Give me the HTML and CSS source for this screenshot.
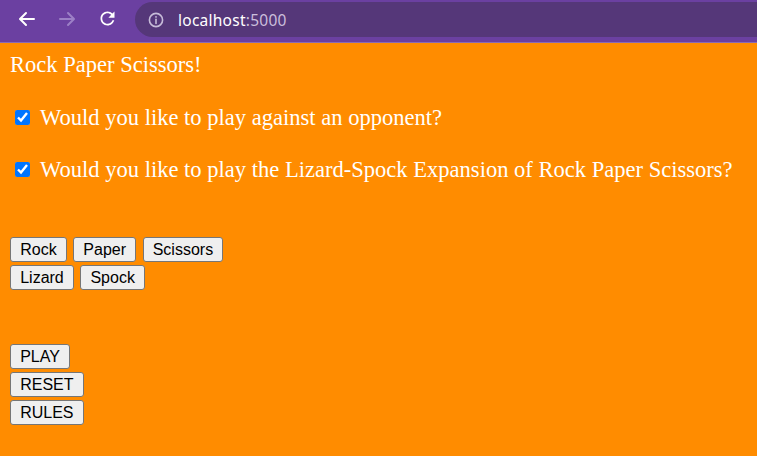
FILE: index.html
```html
<!DOCTYPE html>
<html lang="en">
<head>
<meta charset="utf-8">
<title>Rock Paper Scissors</title>
<link rel="stylesheet" href="styles.css">
</head>
<body>
<div class="chrome">
  <div class="nav-btn">
    <svg width="18" height="18" viewBox="0 0 18 18" fill="none" stroke="#ffffff" stroke-width="2" stroke-linecap="round" stroke-linejoin="round"><path d="M16 9H2.5M8 3L2 9l6 6"/></svg>
  </div>
  <div class="nav-btn">
    <svg width="18" height="18" viewBox="0 0 18 18" fill="none" stroke="#9c80c6" stroke-width="2" stroke-linecap="round" stroke-linejoin="round"><path d="M2 9h13.5M10 3l6 6-6 6"/></svg>
  </div>
  <div class="nav-btn">
    <svg width="21" height="21" viewBox="0 0 24 24" fill="#ffffff"><path d="M17.65 6.35C16.2 4.9 14.21 4 12 4c-4.42 0-7.99 3.58-7.99 8s3.57 8 7.99 8c3.73 0 6.84-2.55 7.73-6h-2.08c-.82 2.33-3.04 4-5.650 4-3.31 0-6-2.690-6-6s2.69-6 6-6c1.66 0 3.14.69 4.22 1.78L13 11h7V4l-2.35 2.35z"/></svg>
  </div>
  <div class="omnibox">
    <svg class="info" width="16" height="16" viewBox="0 0 16 16" fill="none" stroke="#c7bcd9" stroke-width="1.6"><circle cx="8" cy="8" r="6.6"/><path d="M8 7.2v4.2" stroke-linecap="round"/><circle cx="8" cy="4.9" r="0.5" fill="#c7bcd9" stroke-width="0.9"/></svg>
    <span class="url"><span class="host">localhost</span><span class="port">:5000</span></span>
  </div>
</div>
<main class="page">
  <p class="title">Rock Paper Scissors!</p>
  <label class="option option-first"><input type="checkbox" checked><span>Would you like to play against an opponent?</span></label>
  <label class="option"><input type="checkbox" checked><span>Would you like to play the Lizard-Spock Expansion of Rock Paper Scissors?</span></label>
  <div class="choices">
    <div class="row">
      <button class="btn">Rock</button>
      <button class="btn">Paper</button>
      <button class="btn">Scissors</button>
    </div>
    <div class="row">
      <button class="btn">Lizard</button>
      <button class="btn">Spock</button>
    </div>
  </div>
  <div class="controls">
    <button class="btn">PLAY</button>
    <button class="btn btn-reset">RESET</button>
    <button class="btn btn-rules">RULES</button>
  </div>
</main>
</body>
</html>
```
FILE: styles.css
```css
html, body {
  margin: 0;
  padding: 0;
  background: #ff8c00;
  height: 100%;
}

.chrome {
  height: 42px;
  background: #6b40a1;
  border-bottom: 1px solid #8b6bb6;
  display: flex;
  align-items: flex-start;
  padding-left: 10px;
  overflow: hidden;
}

.nav-btn {
  width: 34px;
  height: 37px;
  margin-right: 6px;
  display: flex;
  align-items: center;
  justify-content: center;
}

.nav-btn:nth-child(3) {
  margin-right: 11px;
}

.omnibox {
  margin-top: 2px;
  height: 35px;
  flex: 1;
  margin-right: -30px;
  background: #553779;
  border-radius: 17.5px;
  display: flex;
  align-items: center;
  padding-left: 13px;
}

.info {
  flex: none;
  margin-right: 14px;
  margin-top: 1px;
}

.url {
  font-family: "Noto Sans", "Open Sans", sans-serif;
  font-size: 15.5px;
  letter-spacing: 0.25px;
}

.host { color: #ffffff; }
.port { color: #cbbfdc; }

.page {
  padding: 9px 0 0 10px;
  font-family: "Liberation Serif", "Times New Roman", serif;
  font-size: 22.55px;
  line-height: 26px;
  color: #ffffff;
}

.title {
  margin: 0;
}

.option {
  display: flex;
  align-items: flex-start;
  margin-top: 26px;
}

.option-first {
  margin-top: 26.5px;
}

.option input {
  width: 15px;
  height: 15px;
  margin: 5px 10px 0 5px;
  accent-color: #0075ff;
  flex: none;
}

.choices {
  margin-top: 54.5px;
  display: flex;
  flex-direction: column;
  gap: 3px;
}

.row {
  display: flex;
  gap: 6.3px;
}

.controls {
  margin-top: 54px;
  display: flex;
  flex-direction: column;
  align-items: flex-start;
  gap: 3px;
}

.btn-rules {
  margin-top: -2px;
}

.btn {
  font-family: "Liberation Sans", Arial, sans-serif;
  font-size: 16px;
  line-height: 18px;
  height: 25px;
  box-sizing: border-box;
  padding: 2px 9.2px;
  margin: 0;
  background: #efefef;
  color: #000000;
  border: 1px solid #767676;
  border-radius: 3px;
}
```
